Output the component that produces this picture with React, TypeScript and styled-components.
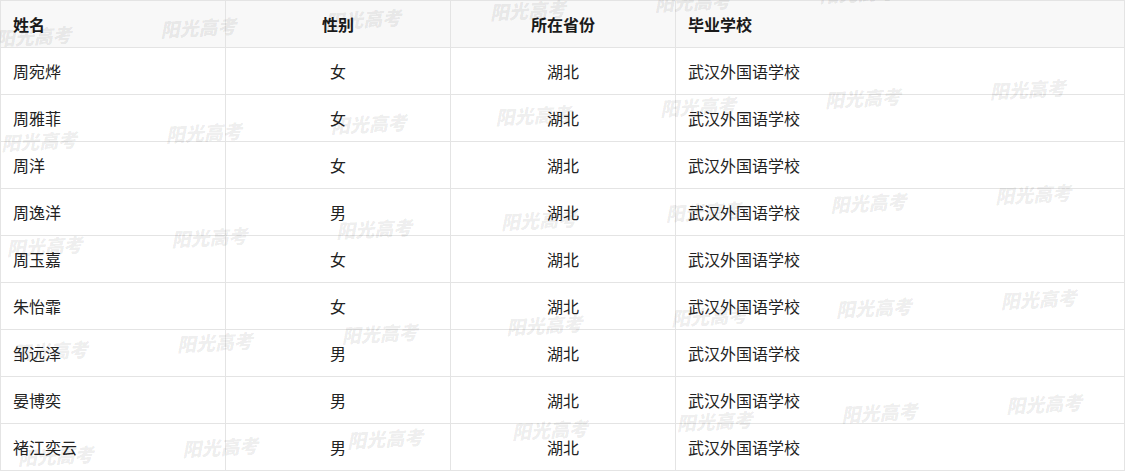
import React from 'react';
import styled, { createGlobalStyle } from 'styled-components';

const GlobalStyle = createGlobalStyle`
  html, body {
    margin: 0;
    padding: 0;
    background: #ffffff;
  }
  body {
    font-family: 'Noto Sans CJK SC', 'Liberation Sans', sans-serif;
  }
`;

const Wrapper = styled.div`
  position: relative;
  width: 1125px;
  height: 471px;
  overflow: hidden;
`;

const Table = styled.div`
  display: grid;
  grid-template-columns: 225px 225px 225px 1fr;
  grid-auto-rows: 47px;
  width: 1125px;
  box-sizing: border-box;
  border-top: 1px solid #e4e4e4;
  border-left: 1px solid #e4e4e4;
`;

const Cell = styled.div<{ $head?: boolean; $center?: boolean }>`
  display: flex;
  align-items: center;
  justify-content: ${(p) => (p.$center ? 'center' : 'flex-start')};
  box-sizing: border-box;
  padding: 0 12px;
  border-right: 1px solid #e4e4e4;
  border-bottom: 1px solid #e4e4e4;
  background: ${(p) => (p.$head ? '#f8f8f8' : '#ffffff')};
  font-size: 16px;
  font-weight: ${(p) => (p.$head ? 700 : 400)};
  color: ${(p) => (p.$head ? '#1a1a1a' : '#222222')};
  white-space: nowrap;
`;

const WatermarkLayer = styled.div`
  position: absolute;
  left: -5px;
  top: 28px;
  display: grid;
  grid-template-columns: repeat(7, 165px);
  grid-auto-rows: 105px;
  transform: rotate(-3deg);
  transform-origin: 0 0;
  pointer-events: none;
`;

const Mark = styled.span`
  font-family: 'Noto Sans CJK SC', sans-serif;
  font-size: 19px;
  line-height: 20px;
  font-weight: 900;
  font-style: italic;
  color: rgba(0, 0, 0, 0.085);
  white-space: nowrap;
`;

const rows = [
  ['周宛烨', '女'],
  ['周雅菲', '女'],
  ['周洋', '女'],
  ['周逸洋', '男'],
  ['周玉嘉', '女'],
  ['朱怡霏', '女'],
  ['邹远泽', '男'],
  ['晏博奕', '男'],
  ['褚江奕云', '男'],
];

const App: React.FC = () => {
  return (
    <Wrapper>
      <GlobalStyle />
      <Table>
        <Cell $head>姓名</Cell>
        <Cell $head $center>性别</Cell>
        <Cell $head $center>所在省份</Cell>
        <Cell $head>毕业学校</Cell>
        {rows.map(([name, sex]) => (
          <React.Fragment key={name}>
            <Cell>{name}</Cell>
            <Cell $center>{sex}</Cell>
            <Cell $center>湖北</Cell>
            <Cell>武汉外国语学校</Cell>
          </React.Fragment>
        ))}
      </Table>
      <WatermarkLayer>
        {Array.from({ length: 35 }).map((_, i) => (
          <Mark key={i}>阳光高考</Mark>
        ))}
      </WatermarkLayer>
    </Wrapper>
  );
};

export default App;
